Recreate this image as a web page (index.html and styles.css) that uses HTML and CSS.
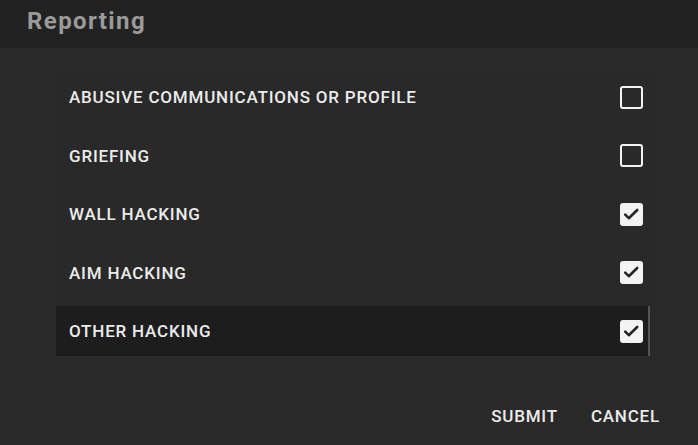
FILE: index.html
```html
<!DOCTYPE html>
<html lang="en">
<head>
    <meta charset="UTF-8">
    <meta name="viewport" content="width=device-width, initial-scale=1.0">
    <title>Reporting</title>
    <link rel="stylesheet" href="styles.css">
</head>
<body>
    <div class="dialog">
        <h2 class="dialog-title">Reporting</h2>

        <div class="report-list">
            <label class="report-row">
                <span>ABUSIVE COMMUNICATIONS OR PROFILE</span>
                <input type="checkbox" class="report-check">
            </label>
            <label class="report-row">
                <span>GRIEFING</span>
                <input type="checkbox" class="report-check">
            </label>
            <label class="report-row">
                <span>WALL HACKING</span>
                <input type="checkbox" class="report-check" checked>
            </label>
            <label class="report-row">
                <span>AIM HACKING</span>
                <input type="checkbox" class="report-check" checked>
            </label>
            <label class="report-row active">
                <span>OTHER HACKING</span>
                <input type="checkbox" class="report-check" checked>
            </label>
        </div>

        <div class="button-container">
            <button type="button" class="text-btn">SUBMIT</button>
            <button type="button" class="text-btn">CANCEL</button>
        </div>
    </div>
</body>
</html>
```

FILE: styles.css
```css
body {
    margin: 0;
    background-color: #2a2a2a;
    font-family: Roboto, "Liberation Sans", sans-serif;
    color: #e8e8e8;
}

.dialog {
    width: 698px;
    height: 445px;
    display: flex;
    flex-direction: column;
}

.dialog-title {
    margin: 0;
    height: 48px;
    padding: 0 0 6px 27px;
    box-sizing: border-box;
    display: flex;
    align-items: center;
    background-color: #222222;
    color: #9a9a9a;
    font-size: 24px;
    font-weight: bold;
    letter-spacing: 1.4px;
}

.report-list {
    margin: 24px 42px 0 56px;
    display: flex;
    flex-direction: column;
    gap: 8.5px;
    background-color: #292929;
}

.report-row {
    height: 50px;
    padding: 0 7px 0 13px;
    margin-right: 6px;
    display: flex;
    align-items: center;
    justify-content: space-between;
    font-size: 17px;
    font-weight: 500;
    letter-spacing: 0.8px;
    color: #ececec;
    cursor: pointer;
}

.report-row.active {
    background-color: #1d1d1d;
    border-right: 2px solid #555555;
    padding-right: 5px;
}

.report-check {
    appearance: none;
    margin: 0;
    width: 23px;
    height: 23px;
    border: 2px solid #f2f2f2;
    border-radius: 3px;
    box-sizing: border-box;
    cursor: pointer;
}

.report-check:checked {
    background-color: #f4f4f4;
    background-image: url("data:image/svg+xml,%3Csvg xmlns='http://www.w3.org/2000/svg' viewBox='0 0 19 19'%3E%3Cpath d='M3.2 9.6l3.6 3.6 8.4-8.2' fill='none' stroke='%23262626' stroke-width='2.6' stroke-linecap='round' stroke-linejoin='round'/%3E%3C/svg%3E");
    background-position: center;
    background-size: 100% 100%;
}

.button-container {
    margin-top: auto;
    margin-bottom: 19px;
    padding-right: 38px;
    display: flex;
    justify-content: flex-end;
    gap: 33px;
}

.text-btn {
    padding: 0;
    border: none;
    background: none;
    color: #ececec;
    font-family: Roboto, "Liberation Sans", sans-serif;
    font-size: 17px;
    font-weight: 500;
    letter-spacing: 0.8px;
    cursor: pointer;
}
```
